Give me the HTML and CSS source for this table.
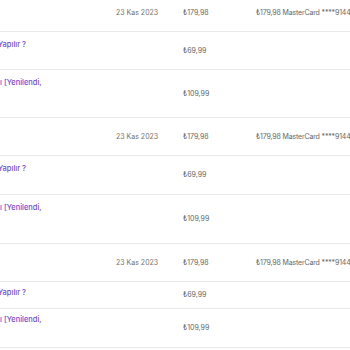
FILE: index.html
```html
<!DOCTYPE html>
<html lang="tr">
<head>
<meta charset="utf-8">
<link rel="stylesheet" href="styles.css">
</head>
<body>
<div class="table">
  <div class="row head h38">
    <div class="cell title"></div>
    <div class="cell date">23 Kas 2023</div>
    <div class="cell price">₺179,98</div>
    <div class="cell pay">₺179,98 MasterCard ****9144</div>
  </div>
  <div class="row item h38">
    <div class="cell title"><span class="cut-y">Yapılır ?</span></div>
    <div class="cell date"></div>
    <div class="cell price">₺69,99</div>
    <div class="cell pay"></div>
  </div>
  <div class="row item h48">
    <div class="cell title"><span class="cut-u">ı [Yenilendi,</span></div>
    <div class="cell date"></div>
    <div class="cell price">₺109,99</div>
    <div class="cell pay"></div>
  </div>

  <div class="row head h38">
    <div class="cell title"></div>
    <div class="cell date">23 Kas 2023</div>
    <div class="cell price">₺179,98</div>
    <div class="cell pay">₺179,98 MasterCard ****9144</div>
  </div>
  <div class="row item h39">
    <div class="cell title"><span class="cut-y">Yapılır ?</span></div>
    <div class="cell date"></div>
    <div class="cell price">₺69,99</div>
    <div class="cell pay"></div>
  </div>
  <div class="row item h49">
    <div class="cell title"><span class="cut-u">ı [Yenilendi,</span></div>
    <div class="cell date"></div>
    <div class="cell price">₺109,99</div>
    <div class="cell pay"></div>
  </div>

  <div class="row head h38">
    <div class="cell title"></div>
    <div class="cell date">23 Kas 2023</div>
    <div class="cell price">₺179,98</div>
    <div class="cell pay">₺179,98 MasterCard ****9144</div>
  </div>
  <div class="row item h27 tight">
    <div class="cell title"><span class="cut-y">Yapılır ?</span></div>
    <div class="cell date"></div>
    <div class="cell price">₺69,99</div>
    <div class="cell pay"></div>
  </div>
  <div class="row item h39 tight">
    <div class="cell title"><span class="cut-u">ı [Yenilendi,</span></div>
    <div class="cell date"></div>
    <div class="cell price">₺109,99</div>
    <div class="cell pay"></div>
  </div>

  <div class="row head h38">
    <div class="cell title"></div>
    <div class="cell date"></div>
    <div class="cell price"></div>
    <div class="cell pay"></div>
  </div>
</div>
</body>
</html>
```
FILE: styles.css
```css
html, body {
  margin: 0;
  padding: 0;
  background: #ffffff;
  overflow: hidden;
}
body {
  font-family: Inter, "Noto Sans", "Liberation Sans", sans-serif;
  font-size: 7px;
  color: #6b6b6b;
}
.table {
  margin-top: -6px;
  width: 350px;
  overflow: hidden;
}
.row {
  display: grid;
  grid-template-columns: 116px 67px 73px 1fr;
  align-items: center;
  border-bottom: 1px solid #e9e9e9;
  box-sizing: border-box;
}
.h27 { height: 27px; }
.h38 { height: 38px; }
.h39 { height: 39px; }
.h48 { height: 48px; }
.h49 { height: 49px; }
.cell {
  white-space: nowrap;
  overflow: hidden;
  line-height: 10px;
}
.title {
  align-self: start;
  padding-top: 8px;
  color: #7549cc;
  font-size: 7.5px;
  font-weight: 500;
}
.tight .title {
  padding-top: 6px;
}
.cut-y {
  display: inline-block;
  margin-left: -2px;
}
.cut-u {
  display: inline-block;
  margin-left: 0;
}
.date {
  color: #727272;
}
.price {
  color: #5f6766;
}
.pay {
  color: #666666;
  letter-spacing: -0.15px;
}
```
